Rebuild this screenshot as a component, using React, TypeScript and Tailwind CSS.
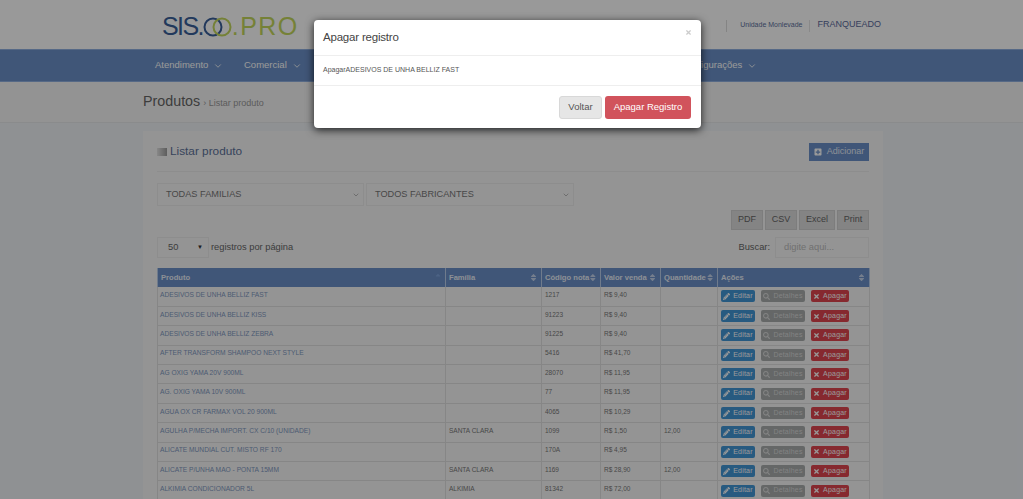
import { ChevronDown } from "lucide-react";
import { FaPencilAlt, FaSearch, FaTimes, FaPlusSquare, FaSort, FaSortUp } from "react-icons/fa";

const rows = [
  ["ADESIVOS DE UNHA BELLIZ FAST", "", "1217", "R$ 9,40", ""],
  ["ADESIVOS DE UNHA BELLIZ KISS", "", "91223", "R$ 9,40", ""],
  ["ADESIVOS DE UNHA BELLIZ ZEBRA", "", "91225", "R$ 9,40", ""],
  ["AFTER TRANSFORM SHAMPOO NEXT STYLE", "", "5416", "R$ 41,70", ""],
  ["AG OXIG YAMA 20V 900ML", "", "28070", "R$ 11,95", ""],
  ["AG. OXIG YAMA 10V 900ML", "", "77", "R$ 11,95", ""],
  ["AGUA OX CR FARMAX VOL 20 900ML", "", "4065", "R$ 10,29", ""],
  ["AGULHA P/MECHA IMPORT. CX C/10 (UNIDADE)", "SANTA CLARA", "1099", "R$ 1,50", "12,00"],
  ["ALICATE MUNDIAL CUT. MISTO RF 170", "", "170A", "R$ 4,95", ""],
  ["ALICATE P/UNHA MAO - PONTA 15MM", "SANTA CLARA", "1169", "R$ 28,90", "12,00"],
  ["ALKIMIA CONDICIONADOR 5L", "ALKIMIA", "81342", "R$ 72,00", ""],
];

const columns = [
  { label: "Produto", width: "w-[288px]" },
  { label: "Família", width: "w-[96px]" },
  { label: "Código nota", width: "w-[59px]" },
  { label: "Valor venda", width: "w-[60px]" },
  { label: "Quantidade", width: "w-[57px]" },
  { label: "Ações", width: "w-[152px]" },
];

function Logo() {
  return (
    <div className="flex items-center h-[24px] text-[25px] leading-none font-['Liberation_Sans',sans-serif]">
      <span className="text-[#3a5f9a] tracking-[-1.6px]">SIS.</span>
      <svg width="29" height="20" viewBox="0 0 29 20" className="shrink-0">
        <circle cx="10" cy="10" r="8.5" fill="none" stroke="#3a5f9a" strokeWidth="2" />
        <circle cx="19" cy="10" r="8.5" fill="none" stroke="#c4d85c" strokeWidth="2" />
      </svg>
      <span className="text-[#c4d85c] tracking-[1.4px]">.PRO</span>
    </div>
  );
}

function NavItem({ label, className = "" }: { label: string; className?: string }) {
  return (
    <div className={`flex items-center gap-[5px] text-[9.5px] text-white ${className}`}>
      <span>{label}</span>
      <ChevronDown size={10} strokeWidth={2} />
    </div>
  );
}

function ExportButton({ label, className }: { label: string; className: string }) {
  return (
    <div className={`h-[20px] flex items-center justify-center bg-[#dcdcdc] border border-[#d0d0d0] text-[9px] text-[#666] ${className}`}>
      {label}
    </div>
  );
}

function RowActions() {
  return (
    <div className="flex items-center text-[7px] text-white tracking-[0.2px]">
      <span className="flex items-center justify-center gap-[3px] w-[34px] h-[12px] rounded-[2px] bg-[#4296d6]">
        <FaPencilAlt size={7} />
        Editar
      </span>
      <span className="flex items-center justify-center gap-[3px] w-[44px] h-[12px] ml-[6px] rounded-[2px] bg-[#a8acac] text-[#dadada]">
        <FaSearch size={7} />
        Detalhes
      </span>
      <span className="flex items-center justify-center gap-[3px] w-[38px] h-[12px] ml-[6px] rounded-[2px] bg-[#e0454f]">
        <FaTimes size={7} />
        Apagar
      </span>
    </div>
  );
}

export default function App() {
  return (
    <div className="relative h-[499px] w-full overflow-hidden bg-[#eef2f6] font-['Liberation_Sans',Arial,sans-serif]">
      {/* top bar */}
      <header className="h-[49px] bg-white flex items-center justify-between pl-[162px] pr-[142px]">
        <div className="pt-[4px]">
          <Logo />
        </div>
        <div className="flex items-center pt-[2px]">
          <span className="h-[12px] border-l border-[#dcdcdc] mr-[13px]" />
          <span className="text-[7px] text-[#5b6f9c]">Unidade Monlevade</span>
          <span className="h-[12px] border-l border-[#e4e4e4] mx-[7px]" />
          <span className="text-[9px] text-[#5b6a9c] -mt-[2px]">FRANQUEADO</span>
        </div>
      </header>

      {/* main menu */}
      <nav className="h-[33px] bg-[#6b90c8] border-y border-[#8fb0e0] flex items-center pl-[155px]">
        <NavItem label="Atendimento" className="w-[89px]" />
        <NavItem label="Comercial" className="w-[437px]" />
        <NavItem label="Configurações" />
      </nav>

      {/* page title */}
      <div className="h-[41px] bg-[#f6f6f6] border-b border-[#e6e8ea] flex items-center pl-[143px] gap-[3px]">
        <span className="text-[14.3px] text-[#666] -mt-[1px]">Produtos</span>
        <span className="text-[9px] text-[#999] pt-[3px]">› Listar produto</span>
      </div>

      {/* product list card */}
      <main className="ml-[143px] mt-[8px] w-[740px] bg-[#f7f7f7] px-[14px]">
        <div className="h-[41px] pt-[1px] flex items-center justify-between border-b border-[#ececec]">
          <div className="flex items-center gap-[3px]">
            <span className="w-[10px] h-[8px] bg-gradient-to-r from-[#e2e2e2] to-[#9c9c9c]" />
            <span className="text-[11.8px] text-[#5c7199]">Listar produto</span>
          </div>
          <div className="flex items-center justify-center gap-[5px] w-[60px] h-[18px] bg-[#6b90c8] text-[9px] text-[#e7eef9]">
            <FaPlusSquare size={8} className="text-white" />
            Adicionar
          </div>
        </div>

        <div className="flex mt-[11px]">
          <div className="w-[207px] h-[23px] pt-[1px] border border-[#ececec] flex items-center justify-between pl-[8px] pr-[3px] text-[9.2px] text-[#777]">
            TODAS FAMILIAS
            <ChevronDown size={8} className="text-[#999]" />
          </div>
          <div className="w-[208px] h-[23px] pt-[1px] ml-[2px] border border-[#ececec] flex items-center justify-between pl-[8px] pr-[3px] text-[9.2px] text-[#777]">
            TODOS FABRICANTES
            <ChevronDown size={8} className="text-[#999]" />
          </div>
        </div>

        <div className="flex justify-end mt-[4px]">
          <div className="flex gap-[2px]">
            <ExportButton label="PDF" className="w-[32px]" />
            <ExportButton label="CSV" className="w-[32px]" />
            <ExportButton label="Excel" className="w-[36px]" />
            <ExportButton label="Print" className="w-[32px]" />
          </div>
        </div>

        <div className="flex items-center justify-between mt-[5px] h-[24px] pt-[1px]">
          <div className="flex items-center">
            <div className="w-[52px] h-[21px] border border-[#ececec] flex items-center justify-between pl-[10px] pr-[5px] text-[9.3px] text-[#666]">
              50
              <span className="text-[6px] text-[#333]">▼</span>
            </div>
            <span className="ml-[2px] text-[9.3px] text-[#666]">registros por página</span>
          </div>
          <div className="flex items-center gap-[5px]">
            <span className="text-[9.3px] text-[#666]">Buscar:</span>
            <div className="w-[94px] h-[21px] border border-[#ececec] flex items-center pl-[8px] text-[9.3px] text-[#bbb]">digite aqui...</div>
          </div>
        </div>

        <table className="mt-[9px] w-[712px] table-fixed border-collapse">
          <thead>
            <tr className="h-[19px] bg-[#6b90c8]">
              {columns.map((c, i) => (
                <th key={c.label} className={`${c.width} border-x border-[#b9cde9] px-[3px] text-left text-[7.6px] font-bold text-[#e9eff9]`}>
                  <div className="flex items-center justify-between whitespace-nowrap">
                    {c.label}
                    {i === 0 ? <FaSortUp size={8} className="text-[#7fa3dc]" /> : <FaSort size={9} className="text-[#c3d3ec]" />}
                  </div>
                </th>
              ))}
            </tr>
          </thead>
          <tbody>
            {rows.map((r) => (
              <tr key={r[0]} className="h-[19.4px] border-b border-[#e0e0e0]">
                <td className="border-x border-[#e0e0e0] pl-[2px] pr-[3px] pb-[3px] text-[6.65px] whitespace-nowrap text-[#7f98bf]">{r[0]}</td>
                <td className="border-x border-[#e0e0e0] px-[3px] pb-[3px] text-[6.5px] text-[#777]">{r[1]}</td>
                <td className="border-x border-[#e0e0e0] px-[3px] pb-[3px] text-[6.5px] text-[#777]">{r[2]}</td>
                <td className="border-x border-[#e0e0e0] px-[3px] pb-[3px] text-[6.5px] text-[#777]">{r[3]}</td>
                <td className="border-x border-[#e0e0e0] px-[3px] pb-[3px] text-[6.5px] text-[#777]">{r[4]}</td>
                <td className="border-x border-[#e0e0e0] pl-[3px]">
                  <RowActions />
                </td>
              </tr>
            ))}
          </tbody>
        </table>
      </main>

      {/* modal backdrop */}
      <div className="absolute inset-0 bg-black/40" />

      {/* delete confirmation */}
      <div className="absolute left-[314px] top-[20px] w-[387px] h-[108px] bg-white rounded-[4px] shadow-[0_2px_8px_rgba(0,0,0,0.8)]">
        <div className="relative h-[36px] border-b border-[#eeeeee] flex items-center pl-[9px] pt-[1px] text-[11.5px] tracking-[-0.2px] text-[#444]">
          Apagar registro
          <FaTimes size={7} className="absolute right-[9px] top-[9px] text-[#cccccc]" />
        </div>
        <div className="h-[30px] border-b border-[#eeeeee] flex items-center pl-[9px] text-[7px] text-[#555]">
          ApagarADESIVOS DE UNHA BELLIZ FAST
        </div>
        <div className="flex justify-end items-start gap-[3px] pt-[10px] pr-[10px]">
          <div className="w-[43px] h-[23px] rounded-[3px] bg-[#e6e6e6] border border-[#d8d8d8] flex items-center justify-center text-[9.5px] text-[#555]">
            Voltar
          </div>
          <div className="w-[86px] h-[23px] rounded-[3px] bg-[#d1535c] flex items-center justify-center text-[9.5px] text-white">
            Apagar Registro
          </div>
        </div>
      </div>
    </div>
  );
}
